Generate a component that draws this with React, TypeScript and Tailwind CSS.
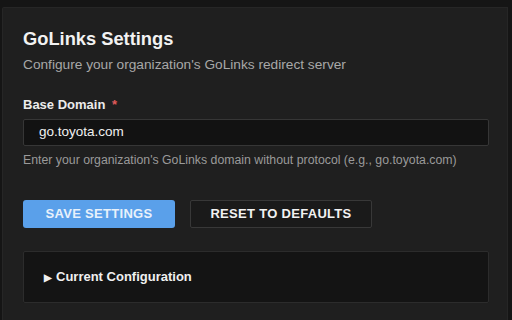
export default function App() {
  return (
    <div className="w-[512px] h-[320px] overflow-hidden bg-[#151515] pt-[7px] pl-[2px] pr-[4px] font-['Liberation_Sans',Arial,sans-serif]">
      <div className="h-full bg-[#1f1f1f] border-l border-t border-r border-[#262626] rounded-tl-[2px] px-[20px] pt-[19px]">
        <h1 className="text-[18.3px] leading-[24px] font-bold text-[#f2f2f2]">GoLinks Settings</h1>
        <p className="mt-[6px] text-[13.7px] leading-[16px] text-[#a8a8a8]">
          Configure your organization's GoLinks redirect server
        </p>

        <label className="block mt-[24px] text-[13px] leading-[16px] font-bold text-[#ececec]">
          Base Domain <span className="text-[#e05a5a] ml-[3px]">*</span>
        </label>
        <div className="mt-[6px] h-[27px] w-[466px] bg-[#121212] border border-[#363636] rounded-[2px] flex items-center pl-[15px] text-[13.5px] text-[#f0f0f0]">
          go.toyota.com
        </div>
        <p className="mt-[7px] text-[12.3px] leading-[14px] text-[#9a9a9a]">
          Enter your organization's GoLinks domain without protocol (e.g., go.toyota.com)
        </p>

        <div className="mt-[33px] flex gap-[15px]">
          <button className="h-[28px] w-[152px] bg-[#5aa0ea] rounded-[3px] text-[13px] font-bold tracking-[0.3px] text-[#e8f1fb]">
            SAVE SETTINGS
          </button>
          <button className="h-[28px] w-[182px] bg-[#1a1a1a] border border-[#383838] rounded-[2px] text-[13px] font-bold tracking-[0.3px] text-[#f2f2f2]">
            RESET TO DEFAULTS
          </button>
        </div>

        <div className="mt-[23px] h-[52px] w-[466px] bg-[#141414] border border-[#2c2c2c] rounded-[2px] flex items-center pl-[20px] text-[13px] font-bold text-[#f0f0f0]">
          <span className="text-[10px] mr-[4px]">▶</span>Current Configuration
        </div>
      </div>
    </div>
  );
}
